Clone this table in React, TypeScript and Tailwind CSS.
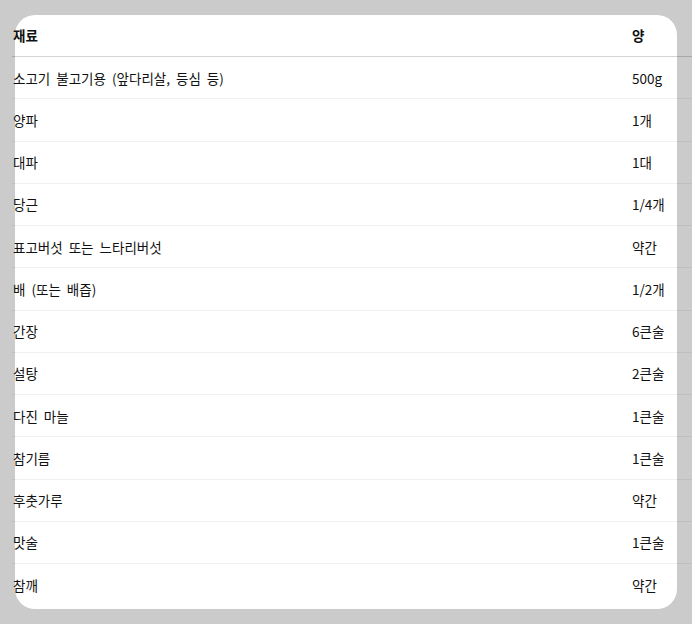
import React from "react";

const rows: [string, string][] = [
  ["소고기 불고기용 (앞다리살, 등심 등)", "500g"],
  ["양파", "1개"],
  ["대파", "1대"],
  ["당근", "1/4개"],
  ["표고버섯 또는 느타리버섯", "약간"],
  ["배 (또는 배즙)", "1/2개"],
  ["간장", "6큰술"],
  ["설탕", "2큰술"],
  ["다진 마늘", "1큰술"],
  ["참기름", "1큰술"],
  ["후춧가루", "약간"],
  ["맛술", "1큰술"],
  ["참깨", "약간"],
];

export default function App() {
  return (
    <div
      className="min-h-[624px] w-full bg-[#cbcbcb] p-[15px]"
      style={{ fontFamily: '"Noto Sans CJK KR", "Noto Sans", sans-serif' }}
    >
      <div className="h-[594px] w-[662px] rounded-[20px] bg-white">
        <div className="ml-[-3px] w-[690px] text-[13.5px] text-[#111]">
          <div className="flex h-[42px] items-center border-b border-black/[0.17] font-bold">
            <div className="w-[620px] pl-[1px]">재료</div>
            <div className="flex-1">양</div>
          </div>
          {rows.map(([a, b], i) => (
            <div
              key={i}
              className={`flex h-[42.25px] items-center ${i < rows.length - 1 ? "border-b border-black/[0.06]" : ""}`}
            >
              <div className="w-[620px] pl-[1px] [word-spacing:3px]">{a}</div>
              <div className="flex-1">{b}</div>
            </div>
          ))}
        </div>
      </div>
    </div>
  );
}
